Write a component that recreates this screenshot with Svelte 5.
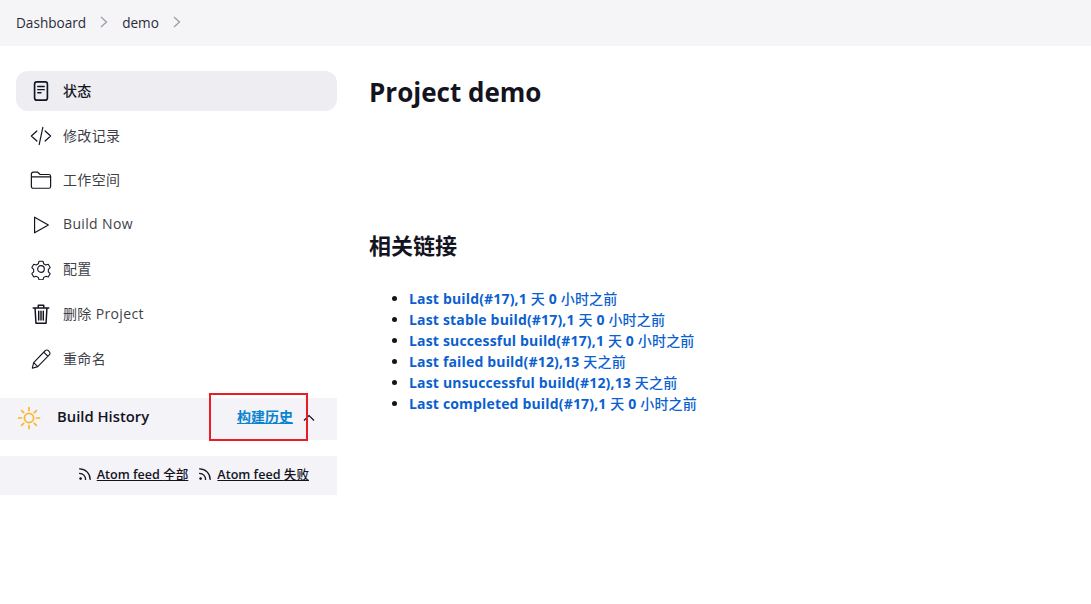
<script>
  const tasks = [
    { label: '状态', icon: 'status', active: true },
    { label: '修改记录', icon: 'code' },
    { label: '工作空间', icon: 'folder' },
    { label: 'Build Now', icon: 'play' },
    { label: '配置', icon: 'gear' },
    { label: '删除 Project', icon: 'trash' },
    { label: '重命名', icon: 'pencil' }
  ];

  const links = [
    ['Last build(#17),1 ', '天', ' 0 ', '小时之前'],
    ['Last stable build(#17),1 ', '天', ' 0 ', '小时之前'],
    ['Last successful build(#17),1 ', '天', ' 0 ', '小时之前'],
    ['Last failed build(#12),13 ', '天之前'],
    ['Last unsuccessful build(#12),13 ', '天之前'],
    ['Last completed build(#17),1 ', '天', ' 0 ', '小时之前']
  ];
</script>

{#snippet rss()}
  <svg class="rss" viewBox="0 0 14 14" fill="none" stroke="currentColor" stroke-width="1.3" stroke-linecap="round">
    <circle cx="2.6" cy="11.6" r="1.3" fill="currentColor" stroke="none" />
    <path d="M1.6 6.4a6 6 0 0 1 6 6" />
    <path d="M1.6 1.8a10.6 10.6 0 0 1 10.6 10.6" />
  </svg>
{/snippet}

<header class="breadcrumbs">
  <a href="#top">Dashboard</a>
  <svg class="chev" viewBox="0 0 8 12" fill="none" stroke="currentColor" stroke-width="1.2"><path d="M1 1l5.5 5L1 11" /></svg>
  <a href="#top">demo</a>
  <svg class="chev" viewBox="0 0 8 12" fill="none" stroke="currentColor" stroke-width="1.2"><path d="M1 1l5.5 5L1 11" /></svg>
</header>

<div class="page">
  <aside class="side">
    <nav class="tasks">
      {#each tasks as task}
        <a href="#top" class="task" class:active={task.active}>
          <span class="task-icon">
            <svg viewBox="0 0 24 24" fill="none" stroke="currentColor" stroke-width="1.3" stroke-linecap="round" stroke-linejoin="round">
              {#if task.icon === 'status'}
                <rect x="5" y="2" width="14" height="20" rx="2.5" stroke-width="1.8" />
                <path d="M8.5 7h7M8.5 10.5h7M8.5 14h3.5" stroke-width="1.6" />
              {:else if task.icon === 'code'}
                <path d="M7.5 6.5L1.5 12l6 5.5M16.5 6.5l6 5.5-6 5.5M14 2.5l-4 19" />
              {:else if task.icon === 'folder'}
                <path d="M1.5 5.5a2 2 0 0 1 2-2h5l2.5 2.5h9.5a2 2 0 0 1 2 2v11a2 2 0 0 1-2 2h-17a2 2 0 0 1-2-2zM1.5 8.5h21" />
              {:else if task.icon === 'play'}
                <path d="M5 3.5v17L20 12z" />
              {:else if task.icon === 'gear'}
                <circle cx="12" cy="12" r="3.6" />
                <path d="M9.6 2.6h4.8l.8 3 2.6 1.5 3-.8 2.3 4-2.2 2.2v3l2.2 2.2-2.3 4-3-.8-2.6 1.5-.8 2.6H9.6l-.8-2.6-2.6-1.5-3 .8-2.3-4 2.2-2.2v-3L.9 10.3l2.3-4 3 .8 2.6-1.5z" transform="translate(1.2 1.2) scale(.9)" />
              {:else if task.icon === 'trash'}
                <path d="M3.5 5.5h17M9 5.5V2.5h6v3M5.5 5.5l1 16.5h11l1-16.5M9.5 9v9.5M12 9v9.5M14.5 9v9.5" stroke-width="1.6" />
              {:else if task.icon === 'pencil'}
                <path d="M2.5 22l1.5-6L16.5 3a2.4 2.4 0 0 1 3.6 0l.9.9a2.4 2.4 0 0 1 0 3.6L8.5 20.3zM4 16l4.5 4.3M15 4.5l4.5 4.5" stroke-width="1.2" />
              {/if}
            </svg>
          </span>
          <span class="task-label">{task.label}</span>
        </a>
      {/each}
    </nav>

    <section class="history">
      <svg class="sun" viewBox="0 0 24 24" fill="none" stroke="#fdb52b" stroke-width="1.7" stroke-linecap="round">
        <circle cx="12" cy="12" r="4.6" />
        <path d="M12 1.5v3M12 19.5v3M1.5 12h3M19.5 12h3M4.6 4.6l2.1 2.1M17.3 17.3l2.1 2.1M4.6 19.4l2.1-2.1M17.3 6.7l2.1-2.1" />
      </svg>
      <span class="history-title">Build History</span>
      <a href="#top" class="history-link">构建历史</a>
      <svg class="collapse" viewBox="0 0 12 8" fill="none" stroke="currentColor" stroke-width="1.2"><path d="M1 6.5L6 1.5l5 5" /></svg>
      <span class="annotation"></span>
    </section>

    <div class="feeds">
      {@render rss()}
      <a href="#top">Atom feed <span class="cjk">全部</span></a>
      {@render rss()}
      <a href="#top">Atom feed <span class="cjk">失败</span></a>
    </div>
  </aside>

  <main class="main">
    <h1>Project demo</h1>
    <h2>相关链接</h2>
    <ul>
      {#each links as parts}
        <li>
          <a href="#top">
            {#each parts as part, i}
              {#if i % 2}<span class="cjk">{part}</span>{:else}{part}{/if}
            {/each}
          </a>
        </li>
      {/each}
    </ul>
  </main>
</div>

<style>
  :global(body) {
    background: #fff;
    color: #14141f;
    font-family: "Open Sans", "Noto Sans CJK SC", sans-serif;
  }

  a {
    color: inherit;
    text-decoration: none;
  }

  .cjk {
    font-weight: 500;
  }

  .breadcrumbs {
    height: 44px;
    padding-bottom: 2px;
    background: #f5f5f8;
    display: flex;
    align-items: center;
    padding-left: 16px;
    font-size: 13.6px;
    color: #2c2c38;
  }

  .chev {
    width: 8px;
    height: 12px;
    margin: 0 14px;
    color: #9a9aa6;
  }

  .page {
    display: flex;
  }

  .side {
    width: 337px;
    padding-top: 25px;
    flex-shrink: 0;
  }

  .tasks {
    display: flex;
    flex-direction: column;
    margin-left: 16px;
  }

  .task {
    height: 40px;
    margin-bottom: 4.6px;
    padding-left: 13px;
    display: flex;
    align-items: center;
    gap: 10px;
    border-radius: 12px;
    font-size: 14px;
    letter-spacing: 0.35px;
    color: #3f3f4a;
  }

  .task-label {
    padding-bottom: 2px;
  }

  .task.active {
    background: #ededf2;
    color: #14141f;
    font-weight: 500;
  }

  .task-icon {
    width: 24px;
    height: 24px;
    color: #14141f;
  }

  .task-icon svg {
    width: 22px;
    height: 22px;
    margin: 1px;
    display: block;
  }

  .history {
    position: relative;
    height: 40px;
    padding-bottom: 2px;
    margin-top: 15px;
    padding-left: 17px;
    background: #f3f3f8;
    display: flex;
    align-items: center;
    font-size: 14px;
  }

  .sun {
    width: 24px;
    height: 24px;
  }

  .history-title {
    margin: 0 0 4px 16px;
    font-weight: 600;
    font-size: 14.8px;
  }

  .history-link {
    margin: 0 10px 4px auto;
    color: #0b84d0;
    font-size: 14px;
    font-weight: 600;
    text-decoration: underline;
  }

  .collapse {
    width: 12px;
    height: 8px;
    margin-right: 22px;
  }

  .annotation {
    position: absolute;
    left: 209px;
    top: -5px;
    width: 95px;
    height: 44px;
    border: 2px solid #ed1c24;
  }

  .feeds {
    height: 35px;
    padding-bottom: 4px;
    margin-top: 16px;
    padding-right: 28px;
    background: #f3f3f8;
    display: flex;
    align-items: center;
    justify-content: flex-end;
    font-size: 12.6px;
    font-weight: 600;
  }

  .feeds a {
    text-decoration: underline;
    margin-left: 5px;
  }

  .feeds a:first-of-type {
    margin-right: 10px;
  }

  .rss {
    width: 14px;
    height: 14px;
  }

  .main {
    margin-left: 32px;
    padding-top: 27px;
  }

  h1 {
    margin: 0;
    font-size: 26px;
    line-height: 38px;
    font-weight: 700;
  }

  h2 {
    margin: 119px 0 0;
    font-size: 22px;
    line-height: 30px;
    font-weight: 700;
  }

  ul {
    margin: 28px 0 0;
    padding-left: 40px;
    font-size: 14px;
    line-height: 21px;
  }

  li a {
    color: #0b5fd0;
    font-weight: 700;
    letter-spacing: 0.17px;
  }
</style>
